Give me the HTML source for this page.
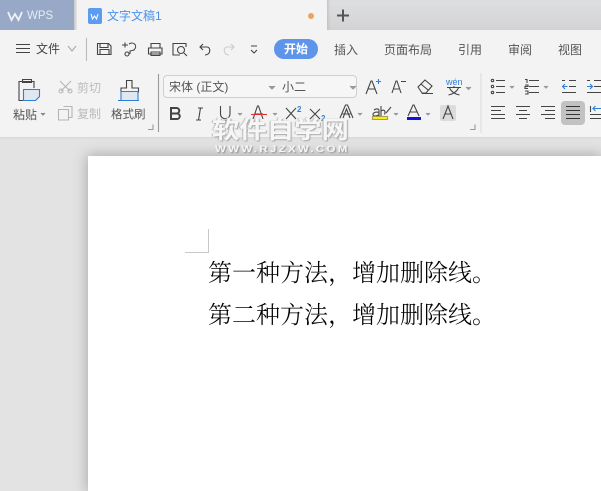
<!DOCTYPE html>
<html><head><meta charset="utf-8">
<style>
html,body{margin:0;padding:0}
body{width:601px;height:491px;overflow:hidden;position:relative;background:#e3e3e3;font-family:"Liberation Sans","Noto Sans CJK SC",sans-serif;color:#444}
.a{position:absolute;white-space:nowrap}
.t{font-size:12px;line-height:16px;color:#555}
svg{position:absolute;left:0;top:0}
.doc{font-family:'Liberation Serif','Noto Serif CJK SC',serif;font-size:24px;line-height:30px;color:#000;font-weight:300}
</style></head><body>
<div class="a" style="left:88px;top:156px;width:513px;height:335px;background:#fff;box-shadow:0 0 13px 1px #a8a8a8"></div>
<div class="a" style="left:0;top:30px;width:601px;height:107px;background:#f3f3f3;box-shadow:0 1px 2px #d4d4d4"></div>
<div class="a" style="left:0;top:0;width:74px;height:30px;background:#98a8c7"></div>
<div class="a" style="left:74px;top:0;width:3px;height:30px;background:linear-gradient(90deg,#c4c6c9,#e8e8e8)"></div>
<div class="a" style="left:77px;top:0;width:250px;height:30px;background:#f3f3f3"></div>
<div class="a" style="left:327px;top:0;width:274px;height:30px;background:linear-gradient(#dedfe1,#d3d3d5);box-shadow:inset 3px 0 3px -2px #bbb"></div>
<div class="a" style="left:27px;top:8px;font-size:11.500px;line-height:16px;color:#e6ebf4">WPS</div>
<div class="a" style="left:107px;top:8px;font-size:12px;line-height:16px;color:#4a90ee">文字文稿1</div>
<div class="a t" style="left:36px;top:41px;color:#444">文件</div>
<div class="a" style="left:274px;top:39px;width:44px;height:20px;border-radius:10px;background:#5e94ea;color:#fff;font-size:12px;line-height:20px;text-align:center;font-weight:bold">开始</div>
<div class="a t" style="left:334px;top:42px">插入</div>
<div class="a t" style="left:384px;top:42px">页面布局</div>
<div class="a t" style="left:458px;top:42px">引用</div>
<div class="a t" style="left:508px;top:42px">审阅</div>
<div class="a t" style="left:558px;top:42px">视图</div>
<div class="a t" style="left:13px;top:107px">粘贴</div>
<div class="a t" style="left:77px;top:80px;color:#bbb">剪切</div>
<div class="a t" style="left:77px;top:106px;color:#bbb">复制</div>
<div class="a" style="left:111px;top:107px;font-size:11.500px;line-height:16px;color:#555">格式刷</div>
<div class="a" style="left:163px;top:75px;width:114px;height:21px;border:1px solid #cfcfcf;border-radius:4px 0 0 4px;background:#f6f6f6"></div>
<div class="a" style="left:278px;top:75px;width:78px;height:21px;border:1px solid #cfcfcf;border-left:0;border-radius:0 4px 4px 0;background:#f6f6f6"></div>
<div class="a" style="left:169px;top:79px;font-size:12px;line-height:16px;color:#555">宋体 (正文)</div>
<div class="a" style="left:282px;top:79px;font-size:12px;line-height:16px;color:#555">小二</div>
<div class="a" style="left:561px;top:101px;width:24px;height:24px;border-radius:4px;background:#c2c2c2"></div>
<div class="a" style="left:440px;top:105px;width:16px;height:16px;border-radius:2px;background:#dcdcdc"></div>
<svg width="601" height="491" fill="none" stroke="#444" stroke-width="1.1">
<path d="M8 12l3.500 8 3.500-6 3.500 6 3.500-8" stroke="#eef1f7" stroke-width="1.800"/>
<rect x="88" y="8" width="14" height="16" rx="2" fill="#5b9bf0" stroke="none"/>
<path d="M91 14l1.500 5 2-3 2 3 1.500-5" stroke="#fff"/>
<circle cx="311" cy="16" r="3" fill="#eda25f" stroke="none"/>
<path d="M337 15.500h12M343 9.500v12" stroke="#555" stroke-width="2"/>
<path d="M16 44.500h14M16 48.500h14M16 52.500h14"/>
<path d="M68 46l4 5 4-5" stroke="#aaa"/>
<path d="M86.500 38v23" stroke="#bbb"/>
<path d="M97.500 43.500h11l2.500 2.500v8.500h-13.500zM100 43.500v4h8v-4M100 54.500v-5h9v5"/>
<path d="M122 45h6M125 42.500v5M129 44c5-3 9 2 5 6l-4 1v3"/><circle cx="127" cy="54" r="2"/>
<path d="M151 48v-4.500h9v4.500M148.500 48h13.500v6h-13.500zM151 52h9v3.500h-9z"/>
<path d="M186 47v-3.500h-13v11.500h7"/><circle cx="181" cy="50" r="3.500"/><path d="M184 53l3 3"/>
<path d="M203 44l-3 3 3 3M200 47h7c4 0 4 8-2 8"/>
<path d="M231 44l3 3-3 3M234 47h-7c-4 0-4 8 2 8" stroke="#ccc"/>
<path d="M251 46h6M251 50l3 3 3-3"/>
<path d="M34 88V81.500h-15v19h4M22.500 81.500v-2h9v3h-9z" stroke="#444"/>
<path d="M23.500 89.500h16v7l-4 4h-12z" fill="#dfe7f1" stroke="#2f7fd6"/>
<path d="M60 81l10 10M71 81l-10 10" stroke="#b5b5b5"/><circle cx="61" cy="91" r="2" stroke="#b5b5b5"/><circle cx="70" cy="91" r="2" stroke="#b5b5b5"/>
<path d="M63.500 106.500h8.500v11h-3M58.500 109.500h10v10.500h-10z" stroke="#b5b5b5"/>
<path d="M41 113l2 2 2-2" fill="#888" stroke="#888"/>
<path d="M126.500 80.500h5.500v7.500h6.500v4h-17.500v-4h5.500z"/>
<path d="M121 91.500h17v9h-17z" fill="#dfe7f1" stroke="#2f7fd6"/>
<path d="M118 100.500h21" stroke="#2f7fd6"/>
<path d="M148 129.500h5v-5M158.500 74v58M470 129.500h5v-5" stroke="#999"/>
<path d="M269 86l3 3 3-3M350 86l3 3 3-3" fill="#999" stroke="#999"/>
<path d="M366 94l5-13h1l5 13M368 89h7"/><path d="M376 81.500h5M378.500 79v5" stroke="#2f7fd6"/>
<path d="M392 93l4-12h1l4 12M394 89h5M401 81.500h5"/>
<path d="M418 87l7-7 7 6-6 7h-4zM421 84l7 6M422 93.500h11"/>
<path d="M447 87.500h14M454 86v2M449.500 88c2 4 5 6 10 7M458.500 88c-2 4-5 6-10 7"/>
<text x="446" y="85" font-size="9" fill="#2f7fd6" stroke="none" font-family="Liberation Sans">wén</text>
<path d="M466 87l2.500 2.500 2.500-2.500" fill="#999" stroke="#999"/>
<path d="M171 108h5.500a2.700 2.700 0 0 1 0 5.500h-5.500zM171 113.500h6a2.700 2.700 0 0 1 0 5.500h-6z" stroke-width="2"/>
<path d="M198 108h5M196 120h5M200.500 108l-2 12"/>
<path d="M220.500 106v8a4.700 4.700 0 0 0 9.500 0v-8"/>
<path d="M222 120.500h6" stroke="#2f7fd6"/>
<path d="M238 113l2 2 2-2M273 113l2 2 2-2M358 113l2 2 2-2M394 113l2 2 2-2M426 113l2 2 2-2" fill="#999" stroke="#999"/>
<path d="M253 119l4.500-13h1l4.500 13M255 114h8"/><path d="M251 114.500h16" stroke="#d33"/>
<path d="M286 108l10 11M296 108l-10 11M310 109l10 10M320 109l-10 10"/>
<text x="297" y="112" font-size="8" font-weight="bold" fill="#2f7fd6" stroke="none" font-family="Liberation Sans">2</text>
<text x="321" y="121" font-size="8" font-weight="bold" fill="#2f7fd6" stroke="none" font-family="Liberation Sans">2</text>
<path d="M340 118l5.500-13h2l5.500 13M342.500 114h8"/><path d="M343 118l3.500-9 3.500 9"/>
<path d="M374 110c2-1.500 5-1.500 5 .5v5.500M379 112.500c-3-1-6 0-6 2s4 2 6 0M381 106v10M381 111c3-2 5 0 3.500 3.500M386 113l5-6"/>
<path d="M372.500 116.500h15v3h-15z" fill="#f7ec13" stroke="#a8a050"/>
<path d="M408 116l5-11h1l5 11M410 112h7"/>
<path d="M407 118.500h14" stroke="#1212e0" stroke-width="3"/>
<path d="M443 119l5-13 5 13M445 114h6"/>
<path d="M481 73v60" stroke="#ddd"/>
<path d="M496 80.500h9M496 86.500h9M496 92.500h9M529 80.500h10M529 86.500h10M529 92.500h10M569 80.500h7M569 86.500h7M562 92.500h14M594 80.500h7M594 86.500h7M587 92.500h14M562 80.500h3M587 80.500h3"/>
<circle cx="492.500" cy="80.500" r="1.200"/><circle cx="492.500" cy="86.500" r="1.200"/><circle cx="492.500" cy="92.500" r="1.200"/>
<path d="M525 79.500h2v3.500M525 85h3v1.500h-3v2h3M525 91h3v3h-3"/>
<path d="M510 86l2 2 2-2M544 86l2 2 2-2" fill="#999" stroke="#999"/>
<path d="M562.500 86.500h5M565 84l-2.500 2.500 2.500 2.500M587 86.500h5M590 84l2.500 2.500-2.500 2.500" stroke="#2f7fd6"/>
<path d="M491 106.500h14M491 110.500h10M491 114.500h14M491 118.500h14M516 106.500h14M519 110.500h8M516 114.500h14M519 118.500h8M541 106.500h14M545 110.500h10M541 114.500h14M545 118.500h10"/>
<path d="M566 106.500h14M566 110.500h14M566 114.500h14M566 118.500h14" stroke="#333"/>
<path d="M590.500 106v6"/><path d="M593 108.500h8M595.500 106l-2.500 2.500 2.500 2.500" stroke="#2f7fd6"/><path d="M590 114.500h11M590 118.500h11"/>
</svg>
<svg width="601" height="491" fill="none"><path d="M185 252.500h23.500V229" stroke="#c8c8c8"/></svg>
<div class="a doc" style="left:208px;top:259px">第一种方法，增加删除线。</div>
<div class="a doc" style="left:208px;top:301px">第二种方法，增加删除线。</div>
<div class="a" style="left:212px;top:116px;font-size:24px;line-height:30px;font-weight:bold;color:#f6f6f6;text-shadow:1px 1px 1px #aaa,-1px 0 1px #bbb;transform:scaleX(1.14);transform-origin:0 0">软件自学网</div>
<div class="a" style="left:215px;top:144px;font-size:9.500px;line-height:11px;font-weight:bold;color:#f6f6f6;letter-spacing:1.900px;text-shadow:1px 1px 1px #999;transform:scaleX(1.21);transform-origin:0 0">WWW.RJZXW.COM</div>
</body></html>
